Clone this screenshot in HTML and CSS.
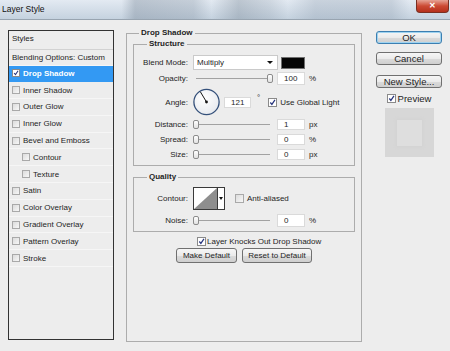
FILE: index.html
```html
<!DOCTYPE html>
<html lang="en">

<head>
    <meta charset="UTF-8">
    <meta name="viewport" content="width=device-width, initial-scale=1.0">
    <title>Layer Style</title>
    <link rel="stylesheet" href="styles.css">
</head>

<body>
    <div class="titlebar">
        <span class="title">Layer Style</span>
        <span class="close">✕</span>
    </div>

    <div class="dialog">
        <div class="styles-list">
            <div class="list-head">Styles</div>
            <div class="item first">Blending Options: Custom</div>
            <div class="item selected"><span class="cb on"><svg viewBox="0 0 8 8"><path d="M1.5 4 L3.3 6.2 L6.8 1" /></svg></span>Drop Shadow</div>
            <div class="item"><span class="cb"></span>Inner Shadow</div>
            <div class="item"><span class="cb"></span>Outer Glow</div>
            <div class="item"><span class="cb"></span>Inner Glow</div>
            <div class="item"><span class="cb"></span>Bevel and Emboss</div>
            <div class="item sub"><span class="cb"></span>Contour</div>
            <div class="item sub"><span class="cb"></span>Texture</div>
            <div class="item"><span class="cb"></span>Satin</div>
            <div class="item"><span class="cb"></span>Color Overlay</div>
            <div class="item"><span class="cb"></span>Gradient Overlay</div>
            <div class="item"><span class="cb"></span>Pattern Overlay</div>
            <div class="item"><span class="cb"></span>Stroke</div>
        </div>

        <fieldset class="panel">
            <legend>Drop Shadow</legend>

            <fieldset class="group structure">
                <legend>Structure</legend>
                <div class="row blend">
                    <span class="lbl">Blend Mode:</span>
                    <div class="select">Multiply<span class="arrow"></span></div>
                    <div class="swatch"></div>
                </div>
                <div class="row opacity">
                    <span class="lbl">Opacity:</span>
                    <div class="slider full"><span class="thumb"></span></div>
                    <div class="field">100</div>
                    <span class="unit">%</span>
                </div>
                <div class="row angle">
                    <span class="lbl">Angle:</span>
                    <svg class="dial" viewBox="0 0 27 28" width="27" height="28">
                        <defs>
                            <radialGradient id="dialFill" cx="0.4" cy="0.35" r="0.7">
                                <stop offset="0" stop-color="#ffffff" />
                                <stop offset="1" stop-color="#e6e9ee" />
                            </radialGradient>
                        </defs>
                        <circle cx="13.5" cy="14" r="12.6" fill="url(#dialFill)" stroke="#34507a" stroke-width="1.3" />
                        <line x1="13.5" y1="14" x2="7.3" y2="3.7" stroke="#151515" stroke-width="1" />
                        <circle cx="13.5" cy="14" r="1.4" fill="#151515" />
                    </svg>
                    <div class="field small angle-field">121</div>
                    <span class="deg">°</span>
                    <span class="cb on big global"><svg viewBox="0 0 8 8"><path d="M1.5 4 L3.3 6.2 L6.8 1" /></svg></span>
                    <span class="cb-text">Use Global Light</span>
                </div>
                <div class="row dist">
                    <span class="lbl">Distance:</span>
                    <div class="slider"><span class="thumb"></span></div>
                    <div class="field small">1</div>
                    <span class="unit">px</span>
                </div>
                <div class="row dist">
                    <span class="lbl">Spread:</span>
                    <div class="slider"><span class="thumb"></span></div>
                    <div class="field small">0</div>
                    <span class="unit">%</span>
                </div>
                <div class="row dist">
                    <span class="lbl">Size:</span>
                    <div class="slider"><span class="thumb"></span></div>
                    <div class="field small">0</div>
                    <span class="unit">px</span>
                </div>
            </fieldset>

            <fieldset class="group quality">
                <legend>Quality</legend>
                <div class="row contour-row">
                    <span class="lbl">Contour:</span>
                    <div class="contour">
                        <svg viewBox="0 0 23 21" width="23" height="21">
                            <rect width="23" height="21" fill="#ffffff" />
                            <polygon points="0,21 23,0 23,21" fill="#8e8e8e" />
                        </svg>
                        <span class="drop"><span class="arrow"></span></span>
                    </div>
                    <span class="cb big anti"></span>
                    <span class="cb-text">Anti-aliased</span>
                </div>
                <div class="row opacity">
                    <span class="lbl">Noise:</span>
                    <div class="slider"><span class="thumb"></span></div>
                    <div class="field">0</div>
                    <span class="unit">%</span>
                </div>
            </fieldset>

            <div class="row knock">
                <span class="cb on big"><svg viewBox="0 0 8 8"><path d="M1.5 4 L3.3 6.2 L6.8 1" /></svg></span>
                <span class="cb-text">Layer Knocks Out Drop Shadow</span>
            </div>
            <div class="buttons">
                <div class="btn make">Make Default</div>
                <div class="btn reset">Reset to Default</div>
            </div>
        </fieldset>

        <div class="side">
            <div class="btn wide default">OK</div>
            <div class="btn wide cancel">Cancel</div>
            <div class="btn wide newstyle">New Style...</div>
            <div class="row preview">
                <span class="cb on big"><svg viewBox="0 0 8 8"><path d="M1.5 4 L3.3 6.2 L6.8 1" /></svg></span>
                <span class="cb-text">Preview</span>
            </div>
            <div class="thumbnail"><div class="thumbnail-inner"></div></div>
        </div>
    </div>
</body>

</html>
```

FILE: styles.css
```css
* {
    box-sizing: border-box;
}

body {
    margin: 0;
    width: 450px;
    height: 351px;
    overflow: hidden;
    background: #ededed;
    font-family: "Liberation Sans", Arial, sans-serif;
    font-size: 8px;
    color: #1e1e1e;
}

/* window chrome */

.titlebar {
    height: 20px;
    display: flex;
    justify-content: space-between;
    align-items: flex-start;
    border-bottom: 1px solid #98a4b0;
    background:
        linear-gradient(90deg, transparent 27%, rgba(110, 125, 142, .35) 30%, rgba(110, 125, 142, .25) 43%, transparent 47%,
            rgba(100, 115, 130, .3) 53%, rgba(100, 115, 130, .15) 60%, transparent 64%,
            rgba(140, 155, 172, .3) 70%, rgba(140, 155, 172, .3) 87%, transparent 91%),
        linear-gradient(#e3eaf2, #c5d2df);
}

.title {
    padding: 4px 0 0 2px;
    font-size: 8.5px;
    color: #111;
}

.close {
    width: 33px;
    height: 13px;
    margin-right: 1px;
    border: 1px solid #7a2f22;
    border-top: 0;
    border-radius: 0 0 4px 4px;
    background: linear-gradient(#e6a395, #cc4a34 50%, #b5301c);
    color: #fff;
    font-size: 8px;
    font-weight: bold;
    line-height: 12px;
    text-align: center;
}

.dialog {
    display: flex;
    align-items: flex-start;
    padding: 10px 0 0 8px;
}

/* styles list */

.styles-list {
    width: 106px;
    height: 310px;
    border: 1px solid #333;
}

.list-head {
    height: 19px;
    padding-left: 3px;
    line-height: 15px;
    border-bottom: 1px solid #d2d2d2;
}

.item {
    height: 16.8px;
    display: flex;
    align-items: center;
    padding-left: 3px;
    white-space: nowrap;
    border-bottom: 1px solid #f6f6f6;
}

.item.first {
    height: 15.5px;
}

.item.sub {
    padding-left: 13px;
}

.item.selected {
    background: #3399f3;
    color: #fff;
    font-weight: bold;
    border-bottom-color: #3399f3;
}

.cb {
    width: 8px;
    height: 8px;
    margin-right: 3px;
    flex-shrink: 0;
    display: flex;
    border: 1px solid #a9a9a9;
    background: linear-gradient(135deg, #dcdcdc, #f7f7f7);
}

.cb.on {
    background: #fff;
    border-color: #8a8a8a;
}

.cb svg {
    width: 100%;
    height: 100%;
}

.cb path {
    fill: none;
    stroke: #27357e;
    stroke-width: 1.4;
}

.cb.big {
    width: 9px;
    height: 9px;
}

/* main panel */

fieldset {
    margin: 0;
    min-width: 0;
    border: 1px solid #acacac;
}

legend {
    padding: 0 2px;
    font-weight: bold;
    line-height: 10px;
}

.panel {
    width: 236px;
    height: 314px;
    margin: -2px 0 0 12px;
    padding: 0 6px;
}

.panel > legend {
    margin-left: 6px;
}

.group {
    padding: 0 0 5px;
}

.group legend {
    margin-left: 13px;
}

.structure {
    margin-top: 1px;
}

.quality {
    margin-top: 6px;
    padding-bottom: 4px;
}

.row {
    display: flex;
    align-items: center;
    white-space: nowrap;
}

.lbl {
    width: 54px;
    margin-right: 5px;
    text-align: right;
    flex-shrink: 0;
}

.blend {
    height: 15px;
    margin-top: 6px;
}

.select {
    width: 85px;
    height: 15px;
    display: flex;
    align-items: center;
    justify-content: space-between;
    padding: 0 4px 0 3px;
    background: #fff;
    border: 1px solid #cacaca;
}

.arrow {
    width: 0;
    height: 0;
    border-left: 3px solid transparent;
    border-right: 3px solid transparent;
    border-top: 3px solid #111;
}

.swatch {
    width: 24px;
    height: 12px;
    margin-left: 3px;
    background: #050505;
    border: 1px solid #6f6f6f;
}

.opacity {
    height: 13px;
    margin-top: 2px;
}

.quality .opacity {
    margin-top: 4px;
}

.slider {
    width: 82px;
    height: 11px;
    display: flex;
    align-items: center;
    background: linear-gradient(#a2a2a2, #a2a2a2) 3px 50% / 74px 1px no-repeat;
}

.thumb {
    width: 6px;
    height: 9px;
    border: 1px solid #8c8c8c;
    border-radius: 2px;
    background: linear-gradient(#fff, #e2e2e2);
}

.slider.full .thumb {
    margin-left: auto;
    margin-right: 2px;
}

.field {
    width: 28px;
    height: 13px;
    margin-left: 2px;
    padding-left: 6px;
    line-height: 11px;
    background: #fff;
    border: 1px solid #dadada;
}

.field.small {
    height: 11px;
    line-height: 9px;
}

.unit {
    margin-left: 4px;
}

.angle {
    height: 28px;
    margin-top: 3px;
}

.dial {
    flex-shrink: 0;
}

.field.angle-field {
    width: 27px;
    margin-left: 4px;
}

.deg {
    align-self: flex-start;
    margin: 5px 0 0 6px;
}

.global {
    margin-left: 8px;
}

.cb-text {
    margin-left: 0;
}

.dist {
    height: 11px;
    margin-top: 4px;
}

.structure .dist:nth-of-type(4) {
    margin-top: 3px;
}

/* quality */

.contour-row {
    height: 23px;
    margin-top: 5px;
}

.contour {
    display: flex;
    height: 23px;
    border: 1px solid #3a3a3a;
}

.contour svg {
    display: block;
}

.drop {
    width: 7px;
    display: flex;
    align-items: center;
    justify-content: center;
    border-left: 1px solid #3a3a3a;
    background: #fff;
}

.drop .arrow {
    border-left-width: 2px;
    border-right-width: 2px;
}

.anti {
    margin-left: 10px;
}

.knock {
    height: 10px;
    margin: 4px 0 0 64px;
}

.knock .cb {
    margin-right: 1px;
}

.buttons {
    display: flex;
    justify-content: center;
    gap: 5px;
    margin-top: 2px;
}

.btn {
    height: 15px;
    display: flex;
    align-items: center;
    justify-content: center;
    border: 1px solid #707070;
    border-radius: 3px;
    background: linear-gradient(#f6f6f6, #ebebeb 50%, #dbdbdb 51%, #cfcfcf);
    white-space: nowrap;
}

.btn.make {
    width: 61px;
}

.btn.reset {
    width: 70px;
}

/* right column */

.side {
    width: 66px;
    margin: 1px 0 0 14px;
    display: flex;
    flex-direction: column;
    align-items: center;
    font-size: 9.5px;
}

.btn.wide {
    width: 66px;
    height: 13px;
}

.btn.default {
    border-color: #3c7fb1;
    box-shadow: inset 0 0 0 1px #9fd3f0;
}

.btn.cancel {
    margin-top: 8px;
}

.btn.newstyle {
    margin-top: 10px;
}

.preview {
    height: 10px;
    margin-top: 5px;
}

.preview .cb {
    margin-right: 2px;
}

.thumbnail {
    width: 49px;
    height: 49px;
    margin-top: 5px;
    display: flex;
    align-items: center;
    justify-content: center;
    background: #d7d7d7;
}

.thumbnail-inner {
    width: 25px;
    height: 26px;
    background: #dedede;
    box-shadow: 0 0 3px 1px #d2d2d2;
}
```
